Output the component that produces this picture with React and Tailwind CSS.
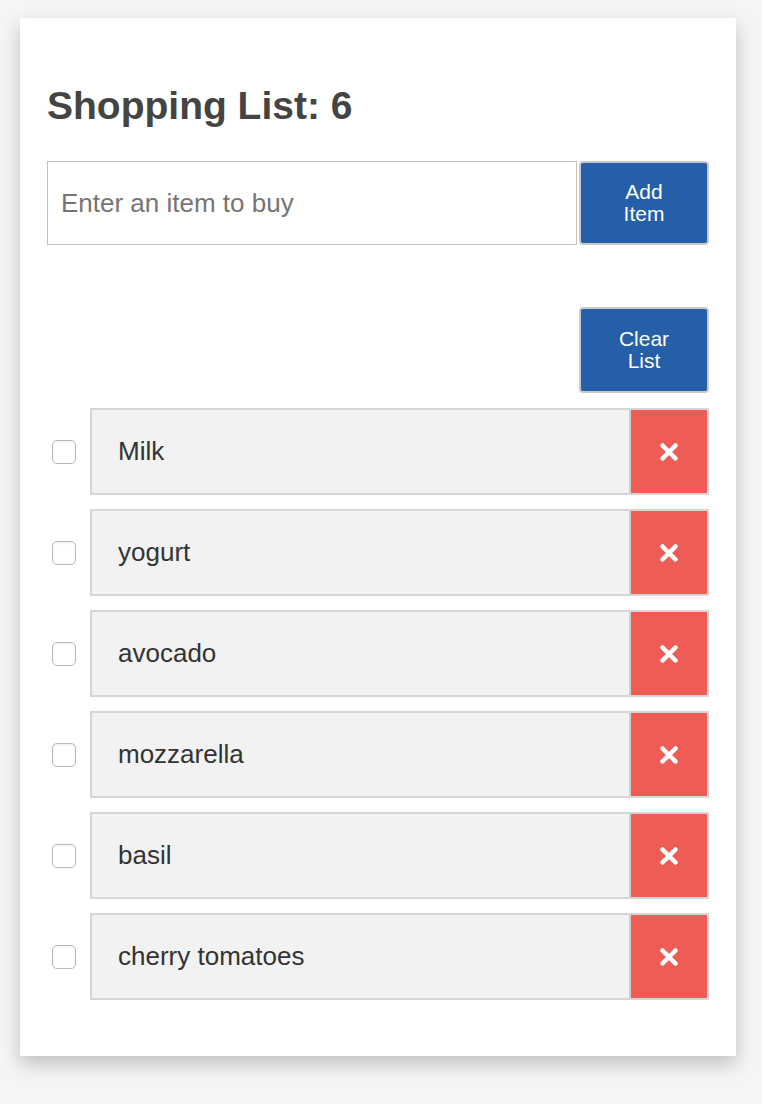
import React, { useState } from 'react';

const initialItems = ['Milk', 'yogurt', 'avocado', 'mozzarella', 'basil', 'cherry tomatoes'];

function CloseIcon() {
  return (
    <svg width="18" height="18" viewBox="0 0 18 18" fill="none">
      <path d="M2.5 2.5 L15.5 15.5 M15.5 2.5 L2.5 15.5" stroke="white" strokeWidth="4.5" strokeLinecap="round" />
    </svg>
  );
}

export default function App() {
  const [items, setItems] = useState(initialItems);
  const [text, setText] = useState('');

  const addItem = () => {
    if (!text.trim()) return;
    setItems([...items, text.trim()]);
    setText('');
  };

  return (
    <div className="min-h-screen bg-[#f5f5f5] pt-[18px] pb-[49px]" style={{ fontFamily: '"Liberation Sans", Arial, sans-serif' }}>
      <div className="ml-[20px] w-[716px] bg-white px-[27px] pt-[68px] pb-[56px] shadow-[0_8px_18px_rgba(0,0,0,0.22)]">
        {/* header */}
        <h1 className="text-[39px] leading-none font-bold text-[#444]">Shopping List: {items.length}</h1>

        {/* add form */}
        <div className="mt-[36px] flex gap-[2px]">
          <input
            placeholder="Enter an item to buy"
            className="h-[84px] flex-1 border border-[#c2c2c2] px-[13px] text-[26px] text-[#333] placeholder-[#757575] outline-none"
            value={text}
            onChange={e => setText(e.target.value)}
          />
          <button
            onClick={addItem}
            className="flex h-[84px] w-[130px] flex-col items-center justify-center rounded-[4px] border-2 border-[#c9c9c9] bg-[#245fa7] text-[21px] leading-[22px] text-white"
          >
            <span>Add</span>
            <span>Item</span>
          </button>
        </div>

        {/* clear */}
        <div className="mt-[62px] flex justify-end">
          <button
            onClick={() => setItems([])}
            className="flex h-[86px] w-[130px] flex-col items-center justify-center rounded-[4px] border-2 border-[#c9c9c9] bg-[#245fa7] text-[21px] leading-[22px] text-white"
          >
            <span>Clear</span>
            <span>List</span>
          </button>
        </div>

        {/* list */}
        <ul className="mt-[15px] flex flex-col gap-[14px]">
          {items.map((item, i) => (
            <li key={i} className="flex items-center">
              <div className="ml-[5px] mr-[14px] h-[24px] w-[24px] rounded-[5px] border border-[#b9b9b9] bg-white shadow-[inset_0_1px_2px_rgba(0,0,0,0.08)]" />
              <div className="flex h-[87px] flex-1 border-2 border-[#d6d6d6] bg-[#f2f2f2]">
                <div className="flex flex-1 items-center pl-[26px] text-[26px] text-[#333]">{item}</div>
                <button
                  onClick={() => setItems(items.filter((_, j) => j !== i))}
                  className="flex w-[78px] items-center justify-center border-l-2 border-[#cfcfcf] bg-[#ef5b55]"
                >
                  <CloseIcon />
                </button>
              </div>
            </li>
          ))}
        </ul>
      </div>
    </div>
  );
}
